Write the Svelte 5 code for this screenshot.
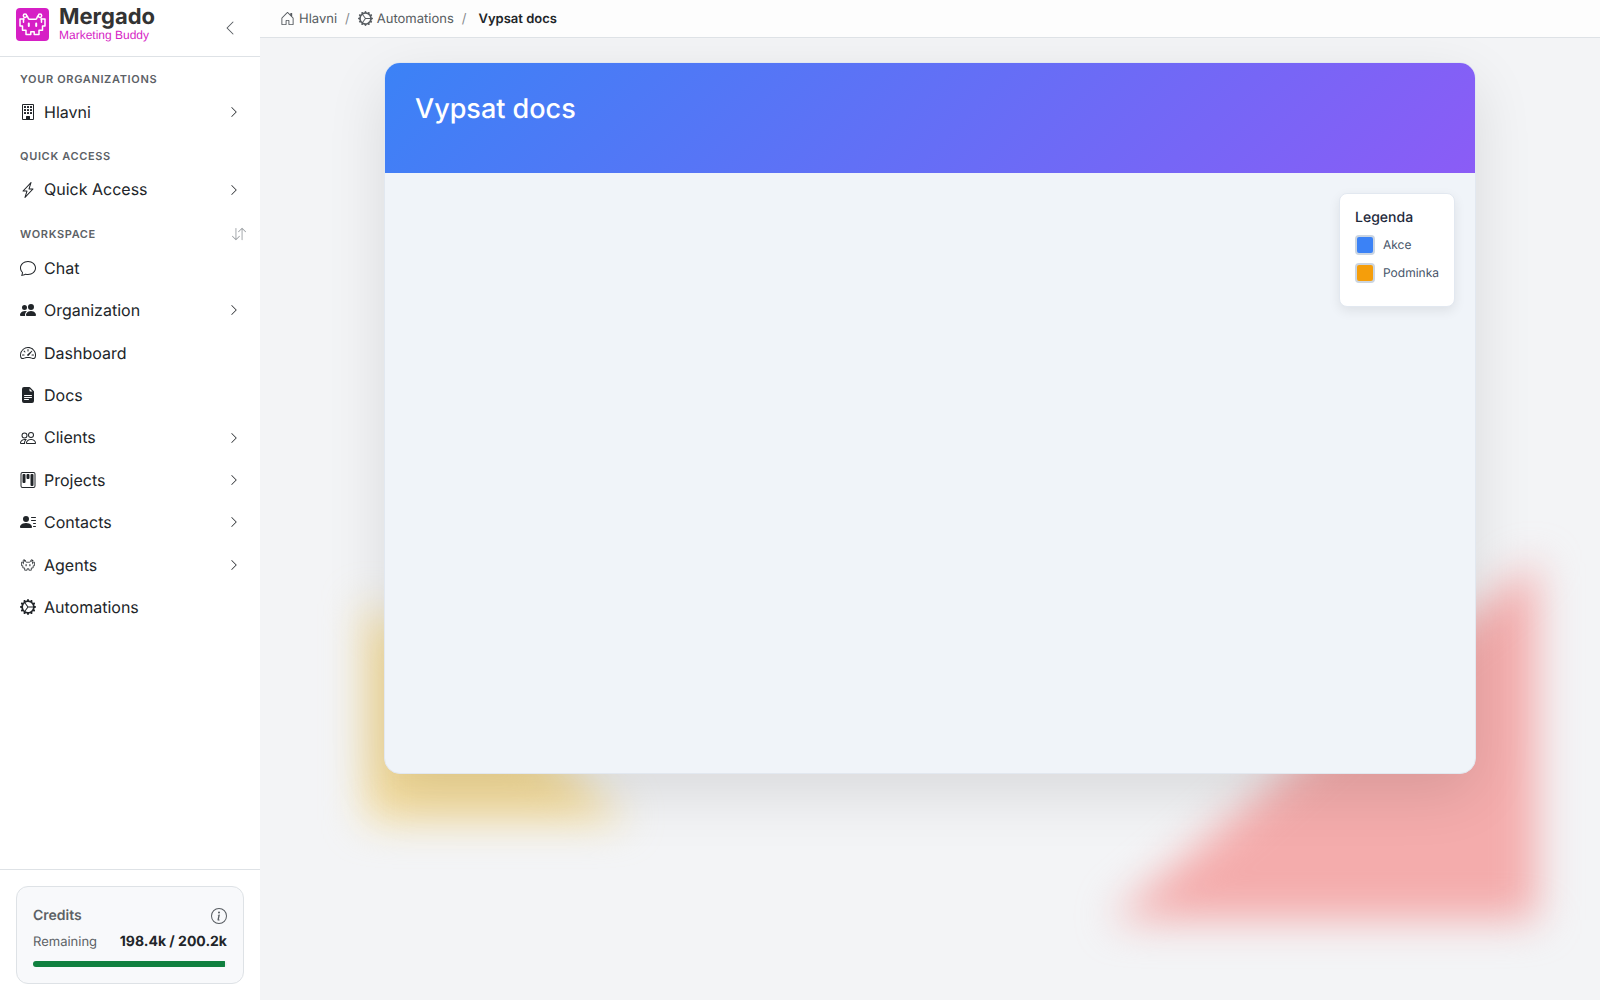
<script lang="ts">
	interface NavItem {
		label: string;
		icon: string;
		expandable?: boolean;
	}

	interface NavSection {
		title: string;
		sortable?: boolean;
		items: NavItem[];
	}

	const icons: Record<string, string> = {
		building:
			'M4 2.5a.5.5 0 0 1 .5-.5h1a.5.5 0 0 1 .5.5v1a.5.5 0 0 1-.5.5h-1a.5.5 0 0 1-.5-.5zm3 0a.5.5 0 0 1 .5-.5h1a.5.5 0 0 1 .5.5v1a.5.5 0 0 1-.5.5h-1a.5.5 0 0 1-.5-.5zm3.5-.5a.5.5 0 0 0-.5.5v1a.5.5 0 0 0 .5.5h1a.5.5 0 0 0 .5-.5v-1a.5.5 0 0 0-.5-.5zM4 5.5a.5.5 0 0 1 .5-.5h1a.5.5 0 0 1 .5.5v1a.5.5 0 0 1-.5.5h-1a.5.5 0 0 1-.5-.5zM7.5 5a.5.5 0 0 0-.5.5v1a.5.5 0 0 0 .5.5h1a.5.5 0 0 0 .5-.5v-1a.5.5 0 0 0-.5-.5zm2.5.5a.5.5 0 0 1 .5-.5h1a.5.5 0 0 1 .5.5v1a.5.5 0 0 1-.5.5h-1a.5.5 0 0 1-.5-.5zM4.5 8a.5.5 0 0 0-.5.5v1a.5.5 0 0 0 .5.5h1a.5.5 0 0 0 .5-.5v-1a.5.5 0 0 0-.5-.5zm2.5.5a.5.5 0 0 1 .5-.5h1a.5.5 0 0 1 .5.5v1a.5.5 0 0 1-.5.5h-1a.5.5 0 0 1-.5-.5zm3.5-.5a.5.5 0 0 0-.5.5v1a.5.5 0 0 0 .5.5h1a.5.5 0 0 0 .5-.5v-1a.5.5 0 0 0-.5-.5zM2 1a1 1 0 0 1 1-1h10a1 1 0 0 1 1 1v14a1 1 0 0 1-1 1H3a1 1 0 0 1-1-1zm11 0H3v14h3v-2.5a.5.5 0 0 1 .5-.5h3a.5.5 0 0 1 .5.5V15h3z',
		lightning:
			'M11.251.068a.5.5 0 0 1 .227.58L9.677 6.5H13a.5.5 0 0 1 .364.843l-8 8.5a.5.5 0 0 1-.842-.49L6.323 9.5H3a.5.5 0 0 1-.364-.843l8-8.5a.5.5 0 0 1 .615-.09zM4.157 8.5H7a.5.5 0 0 1 .478.647L6.11 13.59l5.732-6.09H9a.5.5 0 0 1-.478-.647L9.89 2.41z',
		sort: 'M11.5 15a.5.5 0 0 0 .5-.5V2.707l3.146 3.147a.5.5 0 0 0 .708-.708l-4-4a.5.5 0 0 0-.708 0l-4 4a.5.5 0 1 0 .708.708L11 2.707V14.5a.5.5 0 0 0 .5.5m-7-14a.5.5 0 0 1 .5.5v11.793l3.146-3.147a.5.5 0 0 1 .708.708l-4 4a.5.5 0 0 1-.708 0l-4-4a.5.5 0 0 1 .708-.708L4 13.293V1.5a.5.5 0 0 1 .5-.5',
		chat: 'M2.678 11.894a1 1 0 0 1 .287.801 11 11 0 0 1-.398 2c1.395-.323 2.247-.697 2.634-.893a1 1 0 0 1 .71-.074A8 8 0 0 0 8 14c3.996 0 7-2.807 7-6s-3.004-6-7-6-7 2.808-7 6c0 1.468.617 2.83 1.678 3.894m-.493 3.905a22 22 0 0 1-.713.129c-.2.032-.352-.176-.273-.362a10 10 0 0 0 .244-.637l.003-.01c.248-.72.45-1.548.524-2.319C.743 11.37 0 9.76 0 8c0-3.866 3.582-7 8-7s8 3.134 8 7-3.582 7-8 7a9 9 0 0 1-2.347-.306c-.52.263-1.639.742-3.468 1.105',
		peopleFill:
			'M7 14s-1 0-1-1 1-4 5-4 5 3 5 4-1 1-1 1zm4-6a3 3 0 1 0 0-6 3 3 0 0 0 0 6m-5.784 6A2.24 2.24 0 0 1 5 13c0-1.355.68-2.75 1.936-3.72A6.3 6.3 0 0 0 5 9c-4 0-5 3-5 4s1 1 1 1zM4.5 8a2.5 2.5 0 1 0 0-5 2.5 2.5 0 0 0 0 5',
		people:
			'M15 14s1 0 1-1-1-4-5-4-5 3-5 4 1 1 1 1zm-7.978-1L7 12.996c.001-.264.167-1.03.76-1.72C8.312 10.629 9.282 10 11 10c1.717 0 2.687.63 3.24 1.276.593.69.758 1.457.76 1.72l-.008.002-.014.002zM11 7a2 2 0 1 0 0-4 2 2 0 0 0 0 4m3-2a3 3 0 1 1-6 0 3 3 0 0 1 6 0M6.936 9.28a6 6 0 0 0-1.23-.247A7 7 0 0 0 5 9c-4 0-5 3-5 4q0 1 1 1h4.216A2.24 2.24 0 0 1 5 13c0-1.01.377-2.042 1.09-2.904.243-.294.526-.569.846-.816M4.92 10A5.5 5.5 0 0 0 4 13H1c0-.26.164-1.03.76-1.724.545-.636 1.492-1.256 3.16-1.275ZM1.5 5.5a3 3 0 1 1 6 0 3 3 0 0 1-6 0m3-2a2 2 0 1 0 0 4 2 2 0 0 0 0-4',
		speedometer:
			'M8 4a.5.5 0 0 1 .5.5V6a.5.5 0 0 1-1 0V4.5A.5.5 0 0 1 8 4M3.732 5.732a.5.5 0 0 1 .707 0l.915.914a.5.5 0 1 1-.708.708l-.914-.915a.5.5 0 0 1 0-.707M2 10a.5.5 0 0 1 .5-.5h1.586a.5.5 0 0 1 0 1H2.5A.5.5 0 0 1 2 10m9.5 0a.5.5 0 0 1 .5-.5h1.5a.5.5 0 0 1 0 1H12a.5.5 0 0 1-.5-.5m.754-4.246a.39.39 0 0 0-.527-.02L7.547 9.31a.91.91 0 1 0 1.302 1.258l3.434-4.297a.39.39 0 0 0-.029-.518zM0 10a8 8 0 1 1 15.547 2.661c-.442 1.253-1.845 1.602-2.932 1.25C11.309 13.488 9.475 13 8 13c-1.474 0-3.31.488-4.615.911-1.087.352-2.49.003-2.932-1.25A8 8 0 0 1 0 10m8-7a7 7 0 0 0-6.603 9.329c.203.575.923.876 1.68.63C4.397 12.533 6.358 12 8 12s3.604.532 4.923.96c.757.245 1.477-.056 1.68-.631A7 7 0 0 0 8 3',
		file: 'M9.293 0H4a2 2 0 0 0-2 2v12a2 2 0 0 0 2 2h8a2 2 0 0 0 2-2V4.707A1 1 0 0 0 13.707 4L10 .293A1 1 0 0 0 9.293 0M9.5 3.5v-2l3 3h-2a1 1 0 0 1-1-1M4.5 9a.5.5 0 0 1 0-1h7a.5.5 0 0 1 0 1zM4 10.5a.5.5 0 0 1 .5-.5h7a.5.5 0 0 1 0 1h-7a.5.5 0 0 1-.5-.5m.5 2.5a.5.5 0 0 1 0-1h4a.5.5 0 0 1 0 1z',
		kanban:
			'M13.5 1a1 1 0 0 1 1 1v12a1 1 0 0 1-1 1h-11a1 1 0 0 1-1-1V2a1 1 0 0 1 1-1zm-11-1a2 2 0 0 0-2 2v12a2 2 0 0 0 2 2h11a2 2 0 0 0 2-2V2a2 2 0 0 0-2-2zM6.5 3a1 1 0 0 1 1-1h1a1 1 0 0 1 1 1v3a1 1 0 0 1-1 1h-1a1 1 0 0 1-1-1zm-4 0a1 1 0 0 1 1-1h1a1 1 0 0 1 1 1v7a1 1 0 0 1-1 1h-1a1 1 0 0 1-1-1zm8 0a1 1 0 0 1 1-1h1a1 1 0 0 1 1 1v10a1 1 0 0 1-1 1h-1a1 1 0 0 1-1-1z',
		contacts:
			'M6 8a3 3 0 1 0 0-6 3 3 0 0 0 0 6m-5 6s-1 0-1-1 1-4 6-4 6 3 6 4-1 1-1 1zM11 3.5a.5.5 0 0 1 .5-.5h4a.5.5 0 0 1 0 1h-4a.5.5 0 0 1-.5-.5m.5 2.5a.5.5 0 0 0 0 1h4a.5.5 0 0 0 0-1zm2 3a.5.5 0 0 0 0 1h2a.5.5 0 0 0 0-1zm0 3a.5.5 0 0 0 0 1h2a.5.5 0 0 0 0-1z',
		gear: 'M7.068.727c.243-.97 1.62-.97 1.864 0l.071.286a.96.96 0 0 0 1.622.434l.205-.211c.695-.719 1.888-.03 1.613.931l-.08.284a.96.96 0 0 0 1.187 1.187l.283-.081c.96-.275 1.65.918.931 1.613l-.211.205a.96.96 0 0 0 .434 1.622l.286.071c.97.243.97 1.62 0 1.864l-.286.071a.96.96 0 0 0-.434 1.622l.211.205c.719.695.03 1.888-.931 1.613l-.284-.08a.96.96 0 0 0-1.187 1.187l.081.283c.275.96-.918 1.65-1.613.931l-.205-.211a.96.96 0 0 0-1.622.434l-.071.286c-.243.97-1.62.97-1.864 0l-.071-.286a.96.96 0 0 0-1.622-.434l-.205.211c-.695.719-1.888.03-1.613-.931l.08-.284a.96.96 0 0 0-1.186-1.187l-.284.081c-.96.275-1.65-.918-.931-1.613l.211-.205a.96.96 0 0 0-.434-1.622l-.286-.071c-.97-.243-.97-1.62 0-1.864l.286-.071a.96.96 0 0 0 .434-1.622l-.211-.205c-.719-.695-.03-1.888.931-1.613l.284.08a.96.96 0 0 0 1.187-1.186l-.081-.284c-.275-.96.918-1.65 1.613-.931l.205.211a.96.96 0 0 0 1.622-.434zM12.973 8.5H8.25l-2.834 3.779A4.998 4.998 0 0 0 12.973 8.5m0-1a4.998 4.998 0 0 0-7.557-3.779l2.834 3.78zM5.048 3.967l-.087.065zm-.431.355A4.98 4.98 0 0 0 3.002 8c0 1.455.622 2.765 1.615 3.678L7.375 8zm.344 7.646.087.065z',
		house:
			'M8.354 1.146a.5.5 0 0 0-.708 0l-6 6A.5.5 0 0 0 1.5 7.5v7a.5.5 0 0 0 .5.5h4.5a.5.5 0 0 0 .5-.5v-4h2v4a.5.5 0 0 0 .5.5H14a.5.5 0 0 0 .5-.5v-7a.5.5 0 0 0-.146-.354L13 5.793V2.5a.5.5 0 0 0-.5-.5h-1a.5.5 0 0 0-.5.5v1.293zM2.5 14V7.707l5.5-5.5 5.5 5.5V14H10v-4a.5.5 0 0 0-.5-.5h-3a.5.5 0 0 0-.5.5v4z',
		info: 'M8 15A7 7 0 1 1 8 1a7 7 0 0 1 0 14m0 1A8 8 0 1 0 8 0a8 8 0 0 0 0 16M8.93 6.588l-2.29.287-.082.38.45.083c.294.07.352.176.288.469l-.738 3.468c-.194.897.105 1.319.808 1.319.545 0 1.178-.252 1.465-.598l.088-.416c-.2.176-.492.246-.686.246-.275 0-.375-.193-.304-.533zM9 4.5a1 1 0 1 1-2 0 1 1 0 0 1 2 0',
		chevronRight:
			'M4.646 1.646a.5.5 0 0 1 .708 0l6 6a.5.5 0 0 1 0 .708l-6 6a.5.5 0 0 1-.708-.708L10.293 8 4.646 2.354a.5.5 0 0 1 0-.708',
		chevronLeft:
			'M11.354 1.646a.5.5 0 0 1 0 .708L5.707 8l5.647 5.646a.5.5 0 0 1-.708.708l-6-6a.5.5 0 0 1 0-.708l6-6a.5.5 0 0 1 .708 0'
	};

	const sections: NavSection[] = [
		{
			title: 'Your organizations',
			items: [{ label: 'Hlavni', icon: 'building', expandable: true }]
		},
		{
			title: 'Quick access',
			items: [{ label: 'Quick Access', icon: 'lightning', expandable: true }]
		},
		{
			title: 'Workspace',
			sortable: true,
			items: [
				{ label: 'Chat', icon: 'chat' },
				{ label: 'Organization', icon: 'peopleFill', expandable: true },
				{ label: 'Dashboard', icon: 'speedometer' },
				{ label: 'Docs', icon: 'file' },
				{ label: 'Clients', icon: 'people', expandable: true },
				{ label: 'Projects', icon: 'kanban', expandable: true },
				{ label: 'Contacts', icon: 'contacts', expandable: true },
				{ label: 'Agents', icon: 'robot', expandable: true },
				{ label: 'Automations', icon: 'gear' }
			]
		}
	];

	const legend = [
		{ label: 'Akce', kind: 'action' },
		{ label: 'Podminka', kind: 'condition' }
	];

	const credits = { remaining: 198.4, total: 200.2 };
	let creditsPercent = $derived((credits.remaining / credits.total) * 100);
</script>

{#snippet icon(name: string, size = 16)}
	<svg width={size} height={size} viewBox="0 0 16 16" fill="currentColor" aria-hidden="true">
		<path d={icons[name]} />
	</svg>
{/snippet}

{#snippet robot()}
	<g fill="none" stroke="currentColor" stroke-width="1.5" stroke-linejoin="round" stroke-linecap="round">
		<circle cx="9" cy="7.800" r="1.700" />
		<circle cx="24" cy="7.800" r="1.700" />
		<path d="M10.700 7.800c1.800.2.6 3.400 2.600 3.400h6.400c2 0 .8-3.200 2.600-3.400" />
		<path d="M8 11H4v7h2.500v4.200H10v4.400h4.800v-2.800h3.400v2.800H23v-4.400h3.500V18H29v-7h-4" />
		<path d="M7.500 11v3.200M25.500 11v3.200" />
		<path d="M12.800 15.500v2.500M20.200 15.500v2.500" stroke-width="2" />
	</g>
{/snippet}

<div class="layout">
	<aside class="sidebar">
		<header class="brand">
			<a class="logo" href="/" aria-label="Mergado Marketing Buddy">
				<svg class="logo-mark" width="33" height="33" viewBox="0 0 33 33" aria-hidden="true">
					<rect width="33" height="33" rx="4" />
					{@render robot()}
				</svg>
				<span class="logo-text">
					<span class="logo-name">Mergado</span>
					<span class="logo-sub">Marketing Buddy</span>
				</span>
			</a>
			<button class="icon-button" type="button" aria-label="Collapse sidebar">
				{@render icon('chevronLeft')}
			</button>
		</header>

		<nav class="menu">
			{#each sections as section}
				<section>
					<div class="section-head" class:sortable={section.sortable}>
						<h2>{section.title}</h2>
						{#if section.sortable}
							<button class="icon-button" type="button" aria-label="Reorder">
								{@render icon('sort', 14)}
							</button>
						{/if}
					</div>
					<ul>
						{#each section.items as item}
							<li>
								<a class="nav-link" href="/">
									{#if item.icon === 'robot'}
										<svg width="16" height="16" viewBox="1 1 31 31" aria-hidden="true">
											{@render robot()}
										</svg>
									{:else}
										{@render icon(item.icon)}
									{/if}
									<span>{item.label}</span>
									{#if item.expandable}
										<span class="chevron">{@render icon('chevronRight', 12)}</span>
									{/if}
								</a>
							</li>
						{/each}
					</ul>
				</section>
			{/each}
		</nav>

		<footer class="sidebar-footer">
			<div class="credits">
				<div class="credits-row">
					<span class="credits-title">Credits</span>
					<button class="icon-button" type="button" aria-label="About credits">
						{@render icon('info')}
					</button>
				</div>
				<div class="credits-row amounts">
					<span class="credits-label">Remaining</span>
					<strong>{credits.remaining}k / {credits.total}k</strong>
				</div>
				<div class="progress">
					<div class="progress-bar" style="width: {creditsPercent}%"></div>
				</div>
			</div>
		</footer>
	</aside>

	<div class="content">
		<nav class="breadcrumbs" aria-label="Breadcrumb">
			<a href="/">{@render icon('house', 15)}Hlavni</a>
			<span class="slash">/</span>
			<a href="/">{@render icon('gear', 15)}Automations</a>
			<span class="slash">/</span>
			<strong>Vypsat docs</strong>
		</nav>

		<main>
			<div class="shape yellow"><div></div></div>
			<div class="shape red"><div></div></div>

			<article class="card">
				<header class="card-header">
					<h1>Vypsat docs</h1>
				</header>
				<div class="canvas">
					<div class="legend">
						<h2>Legenda</h2>
						<ul>
							{#each legend as entry}
								<li><span class="swatch {entry.kind}"></span>{entry.label}</li>
							{/each}
						</ul>
					</div>
				</div>
			</article>
		</main>
	</div>
</div>

<style>
	:global(body) {
		margin: 0;
		font-family: Inter, sans-serif;
		color: #212529;
		background: #f3f4f6;
		text-rendering: geometricPrecision;
	}

	* {
		box-sizing: border-box;
	}

	ul {
		list-style: none;
		margin: 0;
		padding: 0;
	}

	h1,
	h2 {
		margin: 0;
	}

	a {
		color: inherit;
		text-decoration: none;
	}

	svg {
		display: block;
		flex-shrink: 0;
	}

	.layout {
		display: flex;
		min-height: 100vh;
	}

	.sidebar {
		display: flex;
		flex-direction: column;
		flex: 0 0 260px;
		background: #fff;
	}

	.brand {
		display: flex;
		align-items: flex-start;
		justify-content: space-between;
		height: 57px;
		padding: 8px 22px 0 16px;
		border-bottom: 1px solid #dee2e6;
	}

	.logo {
		display: flex;
		gap: 10px;
	}

	.logo-mark {
		color: #fff;
	}

	.logo-mark rect {
		fill: #d61fc5;
	}

	.logo-text {
		display: flex;
		flex-direction: column;
	}

	.logo-name {
		font-size: 22px;
		font-weight: 700;
		line-height: 18px;
		color: #333;
	}

	.logo-sub {
		font-family: 'Liberation Sans', Arial, sans-serif;
		font-size: 12px;
		line-height: 18px;
		color: #d61fc5;
	}

	.icon-button {
		display: block;
		padding: 0;
		border: 0;
		background: none;
		color: #565b60;
		cursor: pointer;
	}

	.brand .icon-button {
		margin-top: 12px;
	}

	.menu {
		flex: 1;
		padding-top: 12px;
	}

	.section-head {
		display: flex;
		align-items: center;
		justify-content: space-between;
		height: 20px;
		margin-bottom: 2px;
		padding: 0 14px 0 20px;
	}

	.section-head h2 {
		font-size: 11px;
		font-weight: 600;
		letter-spacing: 0.06em;
		text-transform: uppercase;
		color: #5c6166;
	}

	.sortable {
		height: 21px;
	}

	.sortable .icon-button {
		color: #999da1;
	}

	section + section {
		margin-top: 13px;
	}

	.nav-link {
		display: flex;
		align-items: center;
		gap: 8px;
		padding: 10px 20px;
		font-size: 16px;
		line-height: 1.4;
	}

	.chevron {
		margin-left: auto;
	}

	.sidebar-footer {
		padding: 16px;
		border-top: 1px solid #dee2e6;
	}

	.credits {
		padding: 20px 16px 16px;
		border: 1px solid #dee2e6;
		border-radius: 12px;
		background: #f8f9fb;
	}

	.credits-row {
		display: flex;
		align-items: center;
		justify-content: space-between;
		color: #5c6166;
	}

	.credits-title {
		font-size: 14px;
		font-weight: 600;
		line-height: 18px;
	}

	.amounts {
		margin: 6px 0 8px;
	}

	.credits-label {
		font-size: 13px;
	}

	.credits strong {
		font-size: 14px;
		font-weight: 700;
		line-height: 22px;
		color: #212529;
	}

	.progress {
		height: 6px;
		overflow: hidden;
		border-radius: 3px;
		background: #f0f1f3;
	}

	.progress-bar {
		height: 100%;
		background: #10803f;
	}

	.content {
		display: flex;
		flex-direction: column;
		flex: 1;
		min-width: 0;
	}

	.breadcrumbs {
		display: flex;
		align-items: center;
		gap: 8px;
		height: 38px;
		padding: 0 20px;
		border-bottom: 1px solid #dee2e6;
		background: #fdfdfd;
		font-size: 13px;
		color: #565b60;
	}

	.breadcrumbs a {
		display: flex;
		align-items: center;
		gap: 4px;
	}

	.breadcrumbs strong {
		margin-left: 4px;
		font-weight: 600;
		color: #212529;
	}

	.slash {
		color: #85898d;
	}

	main {
		position: relative;
		flex: 1;
		padding: 24px;
		overflow: hidden;
	}

	/* soft triangles floating behind the card */
	.shape {
		position: absolute;
		filter: blur(20px);
	}

	.shape div {
		width: 100%;
		height: 100%;
	}

	.yellow {
		left: 106px;
		top: 562px;
		width: 262px;
		height: 220px;
	}

	.yellow div {
		background: #f5dc9a;
		clip-path: polygon(0 0, 100% 100%, 0 100%);
	}

	.red {
		right: 63px;
		bottom: 80px;
		width: 426px;
		height: 360px;
	}

	.red div {
		background: #f4acac;
		clip-path: polygon(100% 0, 100% 100%, 0 100%);
	}

	.card {
		position: relative;
		max-width: 1092px;
		margin: 0 auto;
		overflow: hidden;
		border: 1px solid #e2e8f0;
		border-radius: 16px;
		background: #f0f4f9;
		box-shadow: 0 20px 60px rgba(0, 0, 0, 0.11);
	}

	.card-header {
		height: 110px;
		padding: 30px;
		background: linear-gradient(135deg, #3b82f6 0%, #8b5cf6 100%);
		color: #fff;
	}

	h1 {
		font-size: 27px;
		font-weight: 500;
		line-height: 32px;
	}

	.canvas {
		display: flex;
		align-items: flex-start;
		justify-content: flex-end;
		height: 600px;
		padding: 20px;
	}

	.legend {
		padding: 15px;
		border: 1px solid #e2e8f0;
		border-radius: 8px;
		background: #fff;
		box-shadow: 0 4px 12px rgba(0, 0, 0, 0.08);
	}

	.legend h2 {
		margin-bottom: 9px;
		font-size: 14px;
		font-weight: 500;
		line-height: 17px;
		color: #1e293b;
	}

	.legend li {
		display: flex;
		align-items: center;
		gap: 8px;
		margin-bottom: 8px;
		font-size: 12px;
		line-height: 20px;
		color: #475569;
	}

	.swatch {
		width: 20px;
		height: 20px;
		border: 2px solid #cbd5e1;
		border-radius: 4px;
	}

	.action {
		background: #3b82f6;
	}

	.condition {
		background: #f59e0b;
	}
</style>
